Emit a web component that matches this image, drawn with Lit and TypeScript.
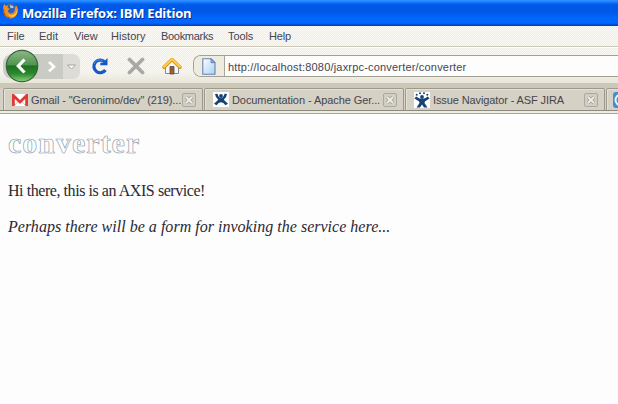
import { LitElement, html, css } from "lit";
import { customElement } from "lit/decorators.js";

const foxIcon = html`<svg class="fox" width="17" height="17" viewBox="0 0 17 17">
  <circle cx="8.5" cy="8.3" r="7" fill="#e67a16"/>
  <circle cx="9" cy="6.400" r="5" fill="#2f62b8"/>
  <path d="M8 2.200q3 0 4 2l-2 1-2-1z" fill="#a7d3ee"/>
  <path d="M1.2 5Q1 2.5 2.6 1l1.3 2.1 2-.4L5.600 4.800l2.200 1-2 1.600q.5 3 3.500 3 3.900-.4 3.600-5.400l1.600-2.500q2.300 3.500.7 7.600-1.800 5.300-6.700 5.300Q1 15.200 1.200 5z" fill="#ef8f22"/>
  <path d="M14.500 3q1.800 6-2.500 8.800-3 1.500-6-.5 1.500 3.200 5.500 2.200 5.500-2 3-10.500z" fill="#fbd45c"/>
  <path d="M1.500 6q0 8 6.500 9.200" fill="none" stroke="#b54a0e"/>
</svg>`;

const backIcon = html`<svg class="back" width="34" height="34" viewBox="0 0 34 34">
  <defs>
    <linearGradient id="g" x1="0" y1="0" x2="0" y2="1">
      <stop offset="0" stop-color="#8fb889"/><stop offset=".46" stop-color="#4f9450"/>
      <stop offset=".5" stop-color="#1d701f"/><stop offset=".75" stop-color="#2c8a2c"/><stop offset="1" stop-color="#8bd37c"/>
    </linearGradient>
  </defs>
  <circle cx="17" cy="17" r="15.700" fill="url(#g)" stroke="#39633a" stroke-width="1.200"/>
  <path d="M19.500 10.500L13.300 17l6.200 6.500" fill="none" stroke="#fff" stroke-width="3.200"/>
</svg>`;

const reloadIcon = html`<svg width="18" height="18" viewBox="0 0 18 18">
  <path d="M13.200 4.600A6.300 6.300 0 1 0 14.400 13" fill="none" stroke="#1458c8" stroke-width="3.200"/>
  <path d="M16.500 1v7.200H9.300V5.800h2.500z" fill="#1458c8"/>
  <path d="M12 3.900A6 6 0 0 0 3 7" fill="none" stroke="#3d8cec"/>
</svg>`;

const stopIcon = html`<svg width="18" height="18" viewBox="0 0 18 18">
  <path d="M2.500 2.500l13 13M15.500 2.500l-13 13" stroke="#a9a9a4" stroke-width="3.800" stroke-linecap="round"/>
</svg>`;

const homeIcon = html`<svg width="20" height="18" viewBox="0 0 20 18">
  <path d="M3.500 9v7.500h13V9L10 3z" fill="#f5f7fb" stroke="#7d8aa5"/>
  <path d="M2 10.200l8-7.700 8 7.700" fill="none" stroke="#d99218" stroke-width="3.400" stroke-linejoin="round" stroke-linecap="round"/>
  <path d="M2 9.800l8-7.600 8 7.600" fill="none" stroke="#fdcb45" stroke-width="2.200" stroke-linejoin="round" stroke-linecap="round"/>
  <path d="M8 9.500h4V17H8z" fill="#a3632c" stroke="#63412c" stroke-width=".8"/>
  <path d="M9 11h2v2H9z" fill="#536483"/>
</svg>`;

const pageIcon = html`<svg width="14" height="17" viewBox="0 0 14 17">
  <defs><linearGradient id="p" x1="0" y1="0" x2="1" y2="1"><stop offset="0" stop-color="#fff"/><stop offset=".4" stop-color="#dcecfa"/><stop offset="1" stop-color="#a9d0f3"/></linearGradient></defs>
  <path d="M.8.700h8.200l4 4v11.600H.8z" fill="url(#p)" stroke="#6583b5" stroke-width="1.100"/>
  <path d="M9 .700v4h4z" fill="#8eb2df" stroke="#5475ad" stroke-width=".8"/>
</svg>`;

const gmailIcon = html`<svg width="16" height="12" viewBox="0 0 16 12">
  <path d="M0 0h16v12H0z" fill="#fff"/>
  <path d="M3 11l4-4.500M13 11L9 6.500" stroke="#e9b9b5"/>
  <path d="M1.400 12V1.500L8 8l6.600-6.500V12" fill="none" stroke="#dc3b38" stroke-width="2.800"/>
</svg>`;

const confluenceIcon = html`<svg width="16" height="15" viewBox="0 0 16 15">
  <path d="M0 0h16v15H0z" fill="#fff"/>
  <circle cx="8" cy="4" r="1.900" fill="#164377"/>
  <path d="M2 2l2.500-.3Q5.500 5.500 8 6.300q2.500-.8 3.500-4.600L14 2q-.6 4-3.200 5.800 1.500 1.400 4.200 3.900l-2.600 1.600Q10.500 10.300 8 10.200q-2.500.1-4.400 3.100L1 11.700q2.700-2.500 4.200-3.900Q2.600 6 2 2z" fill="#164377"/>
</svg>`;

const jiraIcon = html`<svg width="16" height="16" viewBox="0 0 16 16">
  <path d="M0 0h16v16H0z" fill="#fff"/>
  <g fill="#164377"><circle cx="2.700" cy="2.800" r="1"/><circle cx="6" cy="1.200" r="1"/><circle cx="10" cy="1.200" r="1"/><circle cx="13.300" cy="2.800" r="1"/><circle cx="8" cy="5" r="1.900"/></g>
  <path d="M1.300 5.500Q4.500 8.300 8 8.300t6.700-2.800" fill="none" stroke="#164377" stroke-width="2.500"/>
  <path d="M4.500 7.500h7l-1 3.500 3 4.500h-3.500L8 12.500 6 15.500H2.500L5.500 11z" fill="#164377"/>
</svg>`;

const closeIcon = html`<svg class="close" width="14" height="14" viewBox="0 0 14 14">
  <rect x=".5" y=".5" width="13" height="13" rx="1.500" fill="#d2cec2" stroke="#aaa99f"/>
  <path d="M4 4l6 6M10 4l-6 6" stroke="#9f9e95" stroke-width="3.400"/>
  <path d="M4 4l6 6M10 4l-6 6" stroke="#f0eee8" stroke-width="1.800"/>
</svg>`;

@customElement("app-root")
export class AppRoot extends LitElement {
  static styles = css`
    :host { display: block; width: 618px; height: 404px; overflow: hidden; background: #fdfdfd; font: 11px/14px "Liberation Sans", sans-serif; color: #454550; }
    * { box-sizing: border-box; white-space: nowrap; }
    svg { display: block; flex: none; }
    .title { height: 26px; display: flex; align-items: center; padding-left: 2px; gap: 3px; color: #fff;
      background: linear-gradient(#2a8cff 0, #2a8cff 1px, #0a6cf8 3px, #0058e6 5px, #0058e6 12px, #0064fa 17px, #0068ff 23px, #0046c8 25px, #003cb4 26px); }
    .title span { font: bold 13px/18px "Open Sans", sans-serif; letter-spacing: -.26px; text-shadow: 1px 1px #0b2f91; margin-top: -1px; }
    .fox { margin-top: -3px; }
    .menu { height: 21px; display: flex; padding: 3px 0 0 7px; border-bottom: 1px solid #cbc8b8; }
    .menu, .tools { background-color: #f6f5ee; background-image: conic-gradient(#eeeee2 25%, #faf9f4 0 50%, #eeeee2 0 75%, #faf9f4 0); background-size: 2px 2px; }
    .menu span { flex: none; }
    .m0 { width: 32px; } .m1 { width: 35px; } .m2 { width: 37px; } .m3 { width: 50px; letter-spacing: .05px; }
    .m4 { width: 67px; letter-spacing: -.3px; } .m5 { width: 41px; letter-spacing: -.1px; } .m6 { letter-spacing: -.2px; }
    .tools { height: 36px; display: flex; align-items: center; padding-left: 5px; border-top: 1px solid #fff;
      background-image: linear-gradient(transparent 24px, #e9e7da 34px), conic-gradient(#eeeee2 25%, #faf9f4 0 50%, #eeeee2 0 75%, #faf9f4 0); background-size: auto, 2px 2px; }
    .nav { display: flex; align-items: center; width: 85px; height: 34px; margin-top: 2px; }
    .pill { display: flex; align-items: center; width: 77px; height: 25px; margin: -1px 0 0 -2px; border-radius: 9px 7px 7px 9px; background: linear-gradient(90deg, #cbcbc5 60px, #dddcd6 60px); }
    .back { margin-left: 2px; }
    .reload { margin: 1px 18px 0 1px; } .stop { margin-right: 17px; }
    .url { flex: 1; display: flex; align-items: center; height: 22px; margin: 1px 0 0 11px; border: 1px solid #a39f91; border-right: 0; border-radius: 8px 0 0 8px; background: #fdfdfd; overflow: hidden; }
    .site { display: flex; align-items: center; justify-content: center; width: 31px; height: 20px; background: #eeecdf; border-right: 1px solid #aaa699; }
    .address { margin-left: 3px; letter-spacing: .19px; padding-top: 1px; }
    .shade { height: 5px; background: #ccc8b8; }
    .tabs { display: flex; height: 26px; padding: 0 0 1px 3px; border-bottom: 1px solid #aaa696; background: linear-gradient(#d5d1c5 22px, #8e8b7e 22px, #8e8b7e 23px, #eeece0 23px); }
    .tab { flex: none; display: flex; align-items: center; width: 200px; height: 22px; margin-right: 1px; padding-left: 8px; border: 1px solid #9d998c; border-bottom: 0; border-radius: 2px 2px 0 0; background: #d5d1c5; box-shadow: inset 1px 1px #e4e1d8; }
    .label { flex: none; width: 154px; padding-left: 3px; padding-top: 1px; color: #45454c; }
    .t0 { letter-spacing: -.1px; } .t1 { letter-spacing: -.08px; } .t2 { letter-spacing: -.11px; }
    .tab .close { margin-top: 1px; }
    .last { width: 40px; padding-left: 6px; }
    .page { padding: 12px 8px; color: #292935; }
    h1 { margin: 0; font: bold 30px/34px "Liberation Serif", serif; letter-spacing: 1px; color: #fdfdfd; -webkit-text-stroke: .6px #8495a7; }
    p { margin: 0; font: 16px/18px "Liberation Serif", serif; letter-spacing: -.44px; }
    .hi { margin-top: 22px; } .form { margin-top: 18px; font-style: italic; letter-spacing: .02px; }
  `;

  private menus = ["File", "Edit", "View", "History", "Bookmarks", "Tools", "Help"];
  private tabs = [
    { icon: gmailIcon, label: "Gmail - \"Geronimo/dev\" (219)..." },
    { icon: confluenceIcon, label: "Documentation - Apache Ger..." },
    { icon: jiraIcon, label: "Issue Navigator - ASF JIRA" },
  ];

  render() {
    return html`
      <div class="title">${foxIcon}<span>Mozilla Firefox: IBM Edition</span></div>
      <div class="menu">${this.menus.map((m, i) => html`<span class="m${i}">${m}</span>`)}</div>
      <div class="tools">
        <div class="nav"><div class="pill">${backIcon}
          <svg width="41" height="25" viewBox="0 0 41 25"><path d="M10 8l5 4.700-5 4.600" fill="none" stroke="#fff" stroke-width="2.600"/><path d="M28.500 11l4 4 4-4z" fill="#fff" stroke="#a4a39c"/></svg>
        </div></div>
        <div class="reload">${reloadIcon}</div><div class="stop">${stopIcon}</div>${homeIcon}
        <div class="url"><div class="site">${pageIcon}</div><span class="address">http://localhost:8080/jaxrpc-converter/converter</span></div>
      </div>
      <div class="shade"></div>
      <div class="tabs">
        ${this.tabs.map((t, i) => html`<div class="tab">${t.icon}<span class="label t${i}">${t.label}</span>${closeIcon}</div>`)}
        <div class="tab last"><svg width="16" height="16" viewBox="0 0 16 16"><rect width="16" height="16" rx="3" fill="#3d91d0"/><circle cx="8" cy="8" r="5.500" fill="none" stroke="#e8f5ff" stroke-width="2"/></svg></div>
      </div>
      <div class="page">
        <h1>converter</h1>
        <p class="hi">Hi there, this is an AXIS service!</p>
        <p class="form">Perhaps there will be a form for invoking the service here...</p>
      </div>`;
  }
}
